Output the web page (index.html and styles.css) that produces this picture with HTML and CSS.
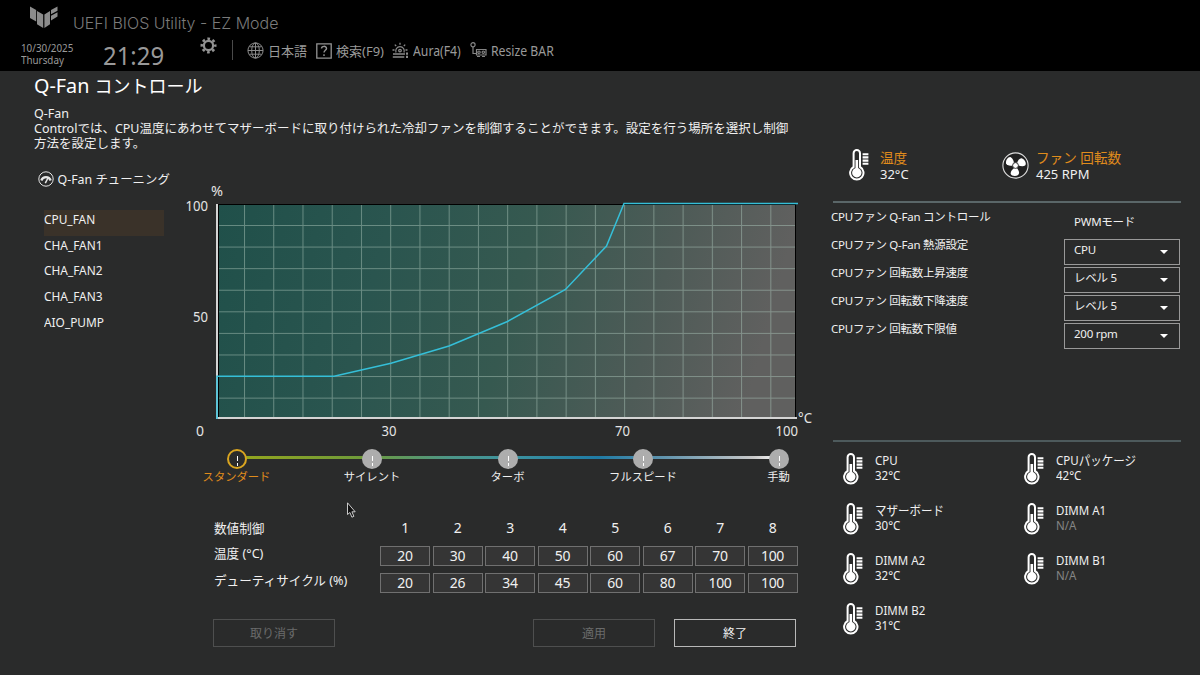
FILE: index.html
```html
<!DOCTYPE html>
<html lang="ja">
<head>
    <meta charset="UTF-8">
    <meta name="viewport" content="width=device-width, initial-scale=1.0">
    <title>UEFI BIOS Utility - EZ Mode</title>
    <link rel="stylesheet" href="styles.css">
</head>
<body>
    <!-- shared icons -->
    <svg class="defs" width="0" height="0">
        <symbol id="thermo" viewBox="0 0 21 32">
            <path d="M4.6 18V4.2a3.2 3.2 0 0 1 6.4 0V18a6.7 6.7 0 1 1-6.4 0z" fill="none" stroke="#fff" stroke-width="2"/>
            <circle cx="7.8" cy="23.8" r="4.7" fill="#fff"/>
            <path d="M7.8 11v12" stroke="#fff" stroke-width="2.6"/>
            <path d="M13.6 5.2h5.8M13.6 8.4h5.8M13.6 11.6h5.8M13.6 14.8h5.8" stroke="#fff" stroke-width="2.1"/>
        </symbol>
    </svg>

    <header class="header">
        <div class="brand">
            <svg class="logo" width="28" height="22" viewBox="0 0 28 22">
                <path d="M0 .5 6.2 4v11.5L0 12zM7 5l6.2 3.4V22L7 18.3zM14.4 8.4 20 5v13.3L14.4 22zM21 4l6.5-3.5v4.2L21 8.3zM21 9.8l6.5-3.5v4.2L21 14.5z" fill="#8c8c8c"/>
            </svg>
            <h1>UEFI BIOS Utility - EZ Mode</h1>
        </div>
        <div class="toolbar">
            <div class="date">10/30/2025<br>Thursday</div>
            <div class="time">21:29</div>
            <svg class="gear" width="17" height="17" viewBox="0 0 17 17" fill="none" stroke="#929292">
                <circle cx="8.5" cy="8.5" r="4.6" stroke-width="2.2"/>
                <circle cx="8.5" cy="8.5" r="6.7" stroke-width="2.6" stroke-dasharray="2.63 2.63" stroke-dashoffset="1.3"/>
            </svg>
            <div class="divider"></div>
            <nav class="menu">
                <a class="menu-lang">
                    <svg width="17" height="17" viewBox="0 0 17 17" fill="none" stroke="#8a8a8a">
                        <circle cx="8.5" cy="8.5" r="7.6"/>
                        <ellipse cx="8.5" cy="8.5" rx="3.8" ry="7.6"/>
                        <path d="M8.5 1v15M1 8.5h15M2.3 4.8h12.4M2.3 12.2h12.4"/>
                    </svg>
                    <span>日本語</span>
                </a>
                <a class="menu-search">
                    <svg width="16" height="16" viewBox="0 0 16 16" fill="none" stroke="#949494">
                        <path d="M.8.8h14.4v14.4H.8z" stroke-width="1.3"/>
                        <path d="M5.5 5.6c0-3 5-3 5-.2 0 1.900-2.5 1.900-2.5 4.200M8 11.200v1.700" stroke-width="1.4"/>
                    </svg>
                    <span>検索(F9)</span>
                </a>
                <a class="menu-aura">
                    <svg width="17" height="17" viewBox="0 0 17 17" fill="none" stroke="#8a8a8a" stroke-width="1.3">
                        <path d="M4 10.5a4.3 4.3 0 1 1 8 0M1 12h4M11 12h2M.8 15h11.500M5 12h6M8 .8v2M2.8 2.6l1.400 1.400M13.200 2.600l-1.400 1.400M.5 8h2M13.500 8h2"/>
                        <circle cx="8" cy="8.6" r="1.3"/>
                        <path d="M15 10.5v2.2M15 13.8v2.2" stroke-width="2"/>
                    </svg>
                    <span class="narrow">Aura(F4)</span>
                </a>
                <a class="menu-bar">
                    <svg width="17" height="17" viewBox="0 0 17 17" fill="none" stroke="#858585" stroke-width="1.2">
                        <circle cx="3" cy="2.8" r="2.1"/>
                        <path d="M3 5v6.5h3"/>
                        <path d="M6.5 7.5h9.500v5.500H6.500zM7 14.500h3M12 14.500h3"/>
                        <circle cx="9" cy="10.2" r="1.2"/>
                        <circle cx="13.3" cy="10.2" r="1.2"/>
                    </svg>
                    <span class="narrow">Resize BAR</span>
                </a>
            </nav>
        </div>
    </header>

    <main class="main">
        <section class="left">
            <h2>Q-Fan <span>コントロール</span></h2>
            <p class="desc">Q-Fan<br>Controlでは、CPU温度にあわせてマザーボードに取り付けられた冷却ファンを制御することができます。設定を行う場所を選択し制御<br>方法を設定します。</p>

            <div class="tuning">
                <div class="fans">
                    <h3>
                        <svg width="16" height="16" viewBox="0 0 16 16" fill="none" stroke="#e6e6e6">
                            <circle cx="8" cy="8" r="7.2"/>
                            <path d="M3.3 9.5a5 5 0 0 1 9.4 0" stroke-width="2.2"/>
                            <path d="M7.3 12.2 10.5 6" stroke-width="1.5"/>
                        </svg>
                        <span>Q-Fan チューニング</span>
                    </h3>
                    <ul>
                        <li class="active"><span class="narrow">CPU_FAN</span></li>
                        <li><span class="narrow">CHA_FAN1</span></li>
                        <li><span class="narrow">CHA_FAN2</span></li>
                        <li><span class="narrow">CHA_FAN3</span></li>
                        <li><span class="narrow">AIO_PUMP</span></li>
                    </ul>
                </div>
                <div class="curve">
                    <svg class="chart" width="640" height="266" viewBox="180 176 640 266">
                        <defs>
                            <linearGradient id="plot" x1="0" y1="0" x2="1" y2=".1">
                                <stop offset="0" stop-color="#20504a"/>
                                <stop offset=".3" stop-color="#2a554f"/>
                                <stop offset=".55" stop-color="#365950"/>
                                <stop offset=".8" stop-color="#4e5b57"/>
                                <stop offset="1" stop-color="#60605f"/>
                            </linearGradient>
                            <pattern id="grid" x="244" y="225" width="29.24" height="21.58" patternUnits="userSpaceOnUse">
                                <path d="M0 .5h29.24M.5 0v21.58" stroke="#a9c4b8" stroke-opacity=".5"/>
                            </pattern>
                        </defs>
                        <rect x="218.5" y="204.5" width="577" height="213" fill="url(#plot)" stroke="#000"/>
                        <rect x="219" y="205" width="576" height="212" fill="url(#grid)"/>
                        <path d="M217 204v214h580" fill="none" stroke="#d4d4d4" stroke-width="2"/>
                        <path d="M217 419v-42.7h117l57-13 58-17.3 58.5-24.5 58-32 41-43.5 17.5-42.500h174" fill="none" stroke="#35bfd8" stroke-width="1.5"/>
                        <g class="axis">
                            <text x="211" y="196" textLength="12" lengthAdjust="spacingAndGlyphs">%</text>
                            <text x="185.5" y="211" textLength="22.5" lengthAdjust="spacingAndGlyphs">100</text>
                            <text x="193" y="322" textLength="15" lengthAdjust="spacingAndGlyphs">50</text>
                            <text x="196" y="436" textLength="8" lengthAdjust="spacingAndGlyphs">0</text>
                            <text x="381.5" y="436" textLength="15" lengthAdjust="spacingAndGlyphs">30</text>
                            <text x="615" y="436" textLength="15" lengthAdjust="spacingAndGlyphs">70</text>
                            <text x="775.5" y="436" textLength="22.5" lengthAdjust="spacingAndGlyphs">100</text>
                            <text x="798" y="423" textLength="14" lengthAdjust="spacingAndGlyphs">°C</text>
                        </g>
                    </svg>
                </div>
            </div>

            <div class="profiles">
                <div class="track"></div>
                <div class="profile selected"><i></i><span>スタンダード</span></div>
                <div class="profile"><i></i><span>サイレント</span></div>
                <div class="profile"><i></i><span>ターボ</span></div>
                <div class="profile"><i></i><span>フルスピード</span></div>
                <div class="profile"><i></i><span>手動</span></div>
            </div>

            <div class="points">
                <div class="row head">
                    <label>数値制御</label>
                    <b>1</b><b>2</b><b>3</b><b>4</b><b>5</b><b>6</b><b>7</b><b>8</b>
                </div>
                <div class="row">
                    <label>温度 (°C)</label>
                    <span>20</span><span>30</span><span>40</span><span>50</span><span>60</span><span>67</span><span>70</span><span>100</span>
                </div>
                <div class="row">
                    <label>デューティサイクル (%)</label>
                    <span>20</span><span>26</span><span>34</span><span>45</span><span>60</span><span>80</span><span>100</span><span>100</span>
                </div>
            </div>

            <div class="buttons">
                <button type="button" class="undo" disabled>取り消す</button>
                <button type="button" disabled>適用</button>
                <button type="button">終了</button>
            </div>
        </section>

        <aside class="right">
            <div class="stats">
                <div class="stat">
                    <svg width="21" height="32"><use href="#thermo"/></svg>
                    <div><em>温度</em><br>32°C</div>
                </div>
                <div class="stat fan">
                    <svg width="27" height="27" viewBox="0 0 27 27">
                        <circle cx="13.5" cy="13.5" r="12.6" fill="#202020" stroke="#ddd" stroke-width="1.1"/>
                        <g fill="#fff">
                            <path id="blade" d="M12.5 15.8c-2.2 1.500-4.200 4-3.800 6 .6 2.400 5.500 3 7.600 1 1.800-1.800.2-5-1.600-7z"/>
                            <use href="#blade" transform="rotate(120 13.5 13.5)"/>
                            <use href="#blade" transform="rotate(240 13.5 13.5)"/>
                        </g>
                        <circle cx="13.5" cy="13.5" r="2.9" fill="#fff" stroke="#333" stroke-width="1"/>
                    </svg>
                    <div><em>ファン 回転数</em><br>425 RPM</div>
                </div>
            </div>

            <div class="settings">
                <div class="setting"><label>CPUファン Q-Fan コントロール</label><p>PWMモード</p></div>
                <div class="setting"><label>CPUファン Q-Fan 熱源設定</label><div class="select">CPU</div></div>
                <div class="setting"><label>CPUファン 回転数上昇速度</label><div class="select">レベル 5</div></div>
                <div class="setting"><label>CPUファン 回転数下降速度</label><div class="select">レベル 5</div></div>
                <div class="setting"><label>CPUファン 回転数下限値</label><div class="select">200 rpm</div></div>
            </div>

            <div class="sensors">
                <div class="sensor"><svg width="21" height="32"><use href="#thermo"/></svg><div class="narrow">CPU<br>32°C</div></div>
                <div class="sensor"><svg width="21" height="32"><use href="#thermo"/></svg><div class="narrow">CPUパッケージ<br>42°C</div></div>
                <div class="sensor"><svg width="21" height="32"><use href="#thermo"/></svg><div class="narrow">マザーボード<br>30°C</div></div>
                <div class="sensor"><svg width="21" height="32"><use href="#thermo"/></svg><div class="narrow">DIMM A1<br><span class="na">N/A</span></div></div>
                <div class="sensor"><svg width="21" height="32"><use href="#thermo"/></svg><div class="narrow">DIMM A2<br>32°C</div></div>
                <div class="sensor"><svg width="21" height="32"><use href="#thermo"/></svg><div class="narrow">DIMM B1<br><span class="na">N/A</span></div></div>
                <div class="sensor"><svg width="21" height="32"><use href="#thermo"/></svg><div class="narrow">DIMM B2<br>31°C</div></div>
            </div>
        </aside>
    </main>

    <svg class="cursor" width="9" height="16" viewBox="0 0 9 16">
        <path d="M.5.8v11.7l2.400-2 2 4.700 2-.9-2-4.500h3.300z" fill="#111" stroke="#ddd" stroke-width=".9"/>
    </svg>
</body>
</html>
```
FILE: styles.css
```css
* {
    box-sizing: border-box;
}
body {
    margin: 0;
    width: 1200px;
    height: 675px;
    overflow: hidden;
    background: #2a2b2b;
    color: #f0f0f0;
    font-family: "Noto Sans", "Noto Sans CJK JP", sans-serif;
    font-size: 12px;
}
h1, h2, h3, p, ul {
    margin: 0;
    padding: 0;
    font-weight: normal;
}
svg {
    display: block;
    flex: none;
}
.defs {
    position: absolute;
}
/* the firmware font is a bit condensed */
.narrow {
    display: inline-block;
    transform: scaleX(.9);
    transform-origin: 0 50%;
}

/* header */
.header {
    height: 71px;
    background: #000;
    color: #999;
}
.brand {
    display: flex;
    height: 38px;
    padding: 6px 0 0 30px;
}
.brand h1 {
    margin: 5px 0 0 15px;
    font-family: Inter, sans-serif;
    font-weight: 300;
    font-size: 16px;
    line-height: 24px;
    color: #7a7a7a;
}
.toolbar {
    display: flex;
    height: 33px;
}
.date {
    width: 82px;
    margin-left: 21px;
    padding-top: 4px;
    font-size: 10.8px;
    line-height: 12px;
    transform: scaleX(.91);
    transform-origin: 0 0;
}
.time {
    width: 97px;
    font-size: 26px;
    line-height: 34px;
    transform: scaleX(.92);
    transform-origin: 0 0;
}
.gear {
    margin-top: -1px;
}
.divider {
    width: 1px;
    height: 20px;
    margin: 2px 14px 0 15px;
    background: #4a4a4a;
}
.menu {
    display: flex;
    height: 25px;
    font-size: 13px;
}
.menu a {
    display: flex;
    align-items: center;
    gap: 4px;
}
.menu-lang {
    width: 69px;
}
.menu-search {
    width: 76px;
}
.menu-aura {
    width: 78px;
}
.menu span {
    white-space: nowrap;
}
.menu .narrow {
    font-size: 13.6px;
}

.main {
    display: flex;
}

/* left side */
.left {
    width: 820px;
}
.left h2 {
    height: 35px;
    padding-left: 34px;
    font-size: 19.8px;
    line-height: 30px;
    color: #fff;
}
.left h2 span {
    font-size: 18px;
}
.desc {
    height: 70px;
    padding-left: 34px;
    font-size: 12.5px;
    line-height: 15px;
    white-space: nowrap;
}
.tuning {
    display: flex;
    height: 266px;
}
.fans {
    width: 180px;
    white-space: nowrap;
}
.fans h3 {
    display: flex;
    align-items: center;
    gap: 4px;
    height: 5px;
    padding-left: 37.5px;
    font-size: 12.4px;
}
.fans ul {
    margin: 29px 0 0 44px;
    width: 120px;
    list-style: none;
}
.fans li {
    height: 25.7px;
    font-size: 13.2px;
    line-height: 18px;
}
.fans .active {
    background: #3a3229;
}
.axis text {
    fill: #e4e4e4;
    font-size: 14px;
}

/* profile slider */
.profiles {
    position: relative;
    display: flex;
    justify-content: space-between;
    width: 612px;
    height: 76px;
    margin-left: 201.5px;
    padding-top: 6.5px;
}
.track {
    position: absolute;
    left: 44px;
    top: 14px;
    width: 534px;
    height: 3px;
    background: linear-gradient(90deg, #93a51f, #6e9b3a 22%, #4d9688 38%, #3c93a0 50%, #1f7ba5 66%, #5f93ad 78%, #c8c8c8 95%, #fff);
}
.profile {
    position: relative;
    width: 70px;
    text-align: center;
    white-space: nowrap;
    font-size: 11.3px;
    line-height: 16px;
}
.profile i {
    display: block;
    width: 20px;
    height: 20px;
    margin: 0 auto;
    border-radius: 50%;
    background: #adadad;
    padding: 7px 9px 0 10px;
}
.profile i::after {
    content: "";
    display: block;
    width: 1px;
    height: 10px;
    background: repeating-linear-gradient(#fff 0 5px, transparent 5px 7px);
}
.profile span {
    display: block;
}
.selected {
    color: #e08c1c;
}
.selected i {
    background: none;
    border: 2px solid #d9a520;
    padding: 5px 7px 0 8px;
}

/* fan points */
.points {
    padding-left: 214px;
}
.row {
    display: grid;
    grid-template-columns: 163.5px repeat(8, 50px);
    column-gap: 2.5px;
    height: 27.5px;
    font-size: 14px;
    letter-spacing: -.3px;
    text-align: center;
}
.row label {
    text-align: left;
    font-size: 12.6px;
    letter-spacing: 0;
    line-height: 15px;
    white-space: nowrap;
}
.row.head label {
    line-height: 22px;
}
.row b {
    font-weight: normal;
    line-height: 20px;
}
.row span {
    height: 20px;
    border: 1px solid #707070;
    background: #353535;
    line-height: 18px;
}
.buttons {
    display: flex;
    padding: 18px 0 0 213px;
    gap: 19px;
}
.buttons button {
    width: 122px;
    height: 28px;
    padding: 0;
    border: 1px solid #b8b8b8;
    background: none;
    color: #f0f0f0;
    font: inherit;
}
.buttons button:disabled {
    border-color: #4e4f4f;
    color: #6a6b6b;
}
.buttons .undo {
    margin-right: 179px;
}

/* right side */
.right {
    width: 380px;
    padding: 78px 0 0 11px;
}
.stats {
    display: flex;
    height: 54px;
    margin-left: 2px;
    width: 348px;
    border-bottom: 2px solid #5a6668;
    font-size: 13px;
    line-height: 16px;
}
.stat {
    display: flex;
    gap: 10px;
    width: 154px;
    padding-left: 16px;
    white-space: nowrap;
}
.stat em {
    font-style: normal;
    font-size: 13.6px;
    color: #e08c1c;
}
.stat div {
    padding-top: 1px;
}
.stat.fan {
    gap: 7px;
    padding-left: 15px;
}
.fan svg {
    margin-top: 3px;
}
.settings {
    height: 237px;
    padding-top: 6px;
}
.setting {
    display: flex;
    height: 28px;
    font-size: 11.5px;
    letter-spacing: -.25px;
}
.setting label {
    width: 233px;
    line-height: 15px;
}
.setting p {
    padding: 6px 0 0 10px;
    line-height: 13px;
}
.select {
    position: relative;
    width: 116px;
    height: 26px;
    margin-top: 2px;
    padding-left: 9px;
    border: 1px solid #999;
    line-height: 20px;
}
.select::after {
    content: "";
    position: absolute;
    right: 11px;
    top: 10px;
    border: 4px solid transparent;
    border-top-color: #fff;
    border-bottom: 0;
}
.sensors {
    display: grid;
    grid-template-columns: 181px 167px;
    grid-auto-rows: 50px;
    margin-left: 2px;
    width: 348px;
    padding-top: 11px;
    border-top: 2px solid #4d5a5c;
    font-size: 12.8px;
    line-height: 14.5px;
}
.sensor {
    display: flex;
    gap: 11px;
    padding-left: 10px;
    white-space: nowrap;
}
.na {
    color: #858585;
}

.cursor {
    position: absolute;
    left: 347px;
    top: 502px;
}
```
